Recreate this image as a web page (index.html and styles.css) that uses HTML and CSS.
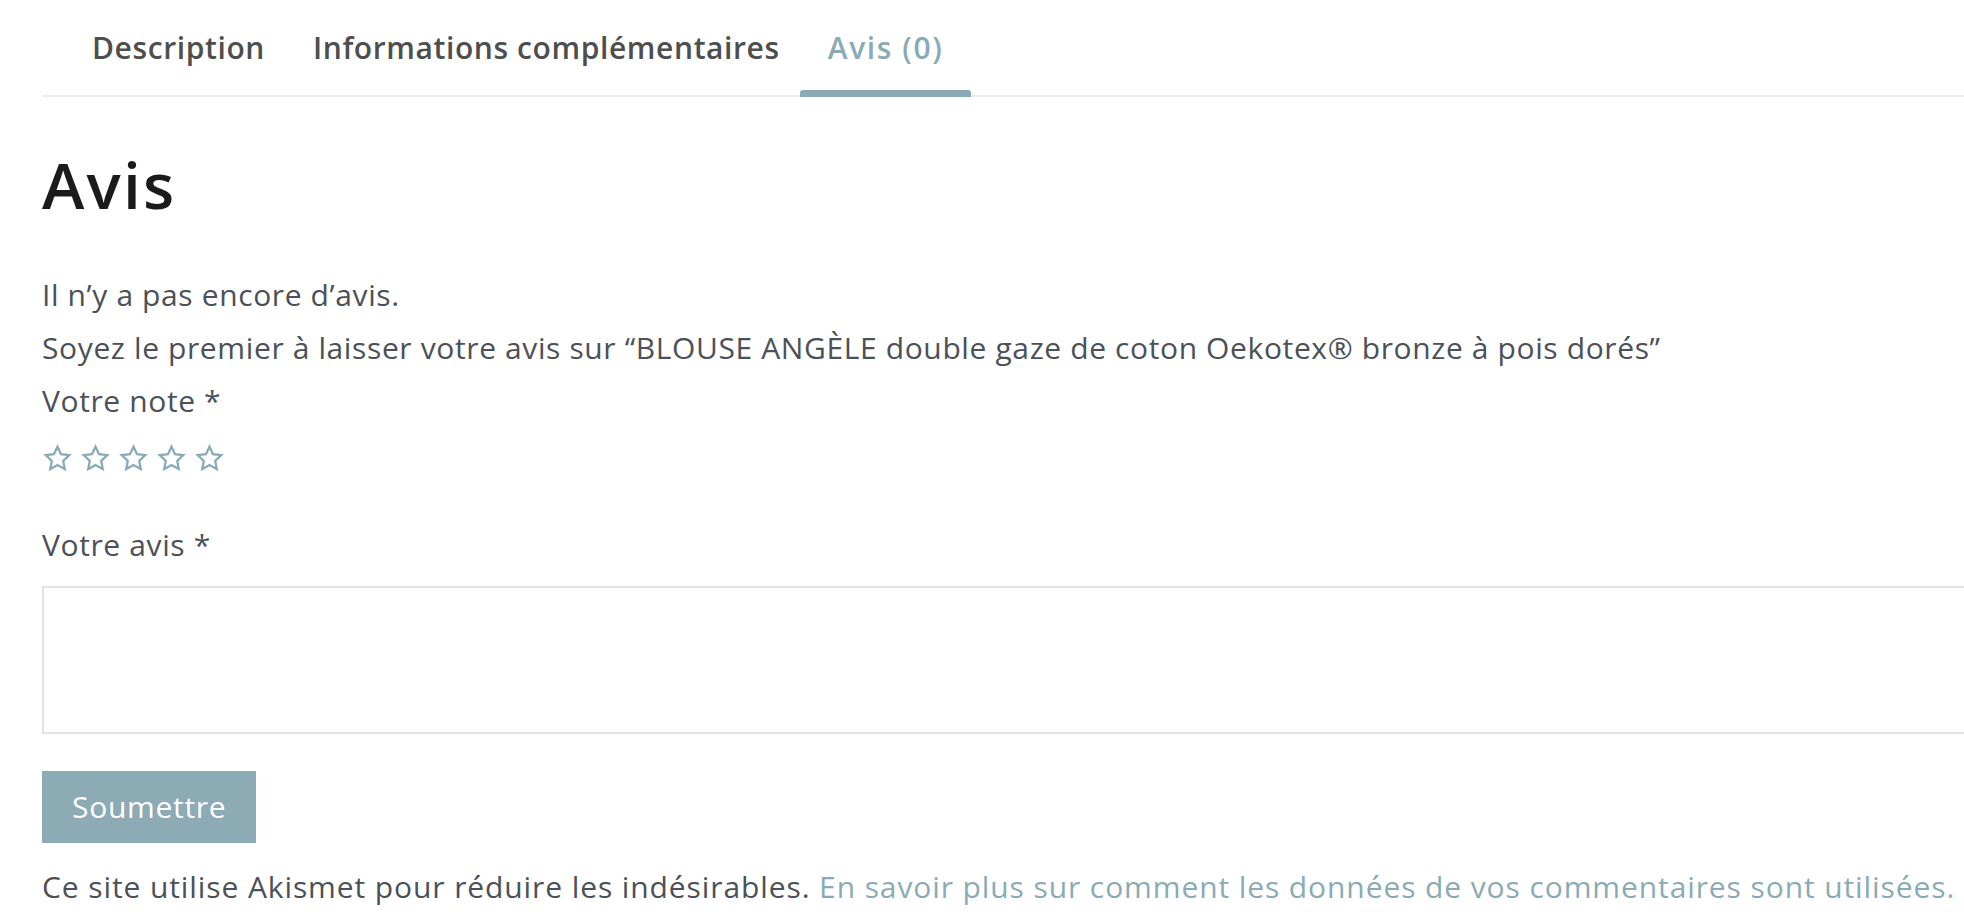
FILE: index.html
```html
<!DOCTYPE html>
<html lang="fr">
<head>
<meta charset="utf-8">
<title>Avis</title>
<link rel="stylesheet" href="styles.css">
</head>
<body>
<div class="page">
  <ul class="tabs">
    <li class="tab">Description</li>
    <li class="tab">Informations complémentaires</li>
    <li class="tab active">Avis (0)</li>
  </ul>
  <section class="reviews">
    <h2 class="title">Avis</h2>
    <p class="line">Il n’y a pas encore d’avis.</p>
    <p class="line">Soyez le premier à laisser votre avis sur “BLOUSE ANGÈLE double gaze de coton Oekotex® bronze à pois dorés”</p>
    <p class="line">Votre note *</p>
    <div class="stars">
      <svg class="star" viewBox="0 0 24 24"><path d="M12 2.2l2.95 6.2 6.75.85-4.95 4.7 1.25 6.75L12 17.4l-6 3.3 1.25-6.75-4.95-4.7 6.75-.85z"/></svg>
      <svg class="star" viewBox="0 0 24 24"><path d="M12 2.2l2.95 6.2 6.75.85-4.95 4.7 1.25 6.75L12 17.4l-6 3.3 1.25-6.75-4.95-4.7 6.75-.85z"/></svg>
      <svg class="star" viewBox="0 0 24 24"><path d="M12 2.2l2.95 6.2 6.75.85-4.95 4.7 1.25 6.75L12 17.4l-6 3.3 1.25-6.75-4.95-4.7 6.75-.85z"/></svg>
      <svg class="star" viewBox="0 0 24 24"><path d="M12 2.2l2.95 6.2 6.75.85-4.95 4.7 1.25 6.75L12 17.4l-6 3.3 1.25-6.75-4.95-4.7 6.75-.85z"/></svg>
      <svg class="star" viewBox="0 0 24 24"><path d="M12 2.2l2.95 6.2 6.75.85-4.95 4.7 1.25 6.75L12 17.4l-6 3.3 1.25-6.75-4.95-4.7 6.75-.85z"/></svg>
    </div>
    <p class="line label-avis">Votre avis *</p>
    <textarea class="comment"></textarea>
    <button class="submit" type="button">Soumettre</button>
    <p class="line notice">Ce site utilise Akismet pour réduire les indésirables. <a class="link" href="#">En savoir plus sur comment les données de vos commentaires sont utilisées.</a></p>
  </section>
</div>
</body>
</html>
```
FILE: styles.css
```css
html, body {
  margin: 0;
  padding: 0;
  background: #ffffff;
  overflow: hidden;
}
body {
  font-family: "Open Sans", "Liberation Sans", sans-serif;
  color: #4b5157;
}
.page {
  padding-left: 42px;
  width: 2100px;
}
.tabs {
  list-style: none;
  margin: 0;
  padding: 0 0 0 26px;
  display: flex;
  border-bottom: 2px solid #ebebf1;
}
.tab {
  position: relative;
  padding: 28px 24px 27px;
  font-size: 30px;
  line-height: 40px;
  letter-spacing: 0.6px;
  font-weight: 600;
  color: #4e4e4e;
  white-space: nowrap;
}
.tab.active {
  color: #8aabb5;
  letter-spacing: 1.6px;
}
.tab.active::after {
  content: "";
  position: absolute;
  left: -4px;
  right: -4px;
  bottom: -2px;
  height: 7px;
  background: #8aabb5;
  border-radius: 3px 3px 0 0;
}
.reviews {
  display: flex;
  flex-direction: column;
  align-items: flex-start;
}
.title {
  margin: 49px 0 0;
  font-size: 64px;
  line-height: 77px;
  letter-spacing: 2.2px;
  font-weight: 600;
  color: #1b1b1b;
}
.line {
  margin: 0;
  font-size: 30px;
  line-height: 53px;
  letter-spacing: 0.62px;
  white-space: nowrap;
}
.title + .line {
  margin-top: 45px;
}
.stars {
  display: flex;
  gap: 7px;
  margin-top: 17px;
}
.star {
  width: 31px;
  height: 29px;
  fill: none;
  stroke: #8aabb5;
  stroke-width: 1.9;
  stroke-linejoin: miter;
}
.label-avis {
  margin-top: 45px;
}
.comment {
  margin: 15px 0 0;
  width: 2000px;
  height: 148px;
  box-sizing: border-box;
  border: 2px solid #e0e4e9;
  resize: none;
  outline: none;
  background: #fff;
}
.submit {
  margin-top: 37px;
  height: 72px;
  padding: 0 30px;
  border: none;
  border-radius: 0;
  background: #8dabb4;
  color: #ffffff;
  font-family: "Open Sans", "Liberation Sans", sans-serif;
  font-size: 30px;
  letter-spacing: 0.7px;
  font-weight: 500;
  line-height: 72px;
}
.notice {
  margin-top: 17px;
  letter-spacing: 0.9px;
}
.link {
  color: #8aabb5;
  text-decoration: none;
}
```
